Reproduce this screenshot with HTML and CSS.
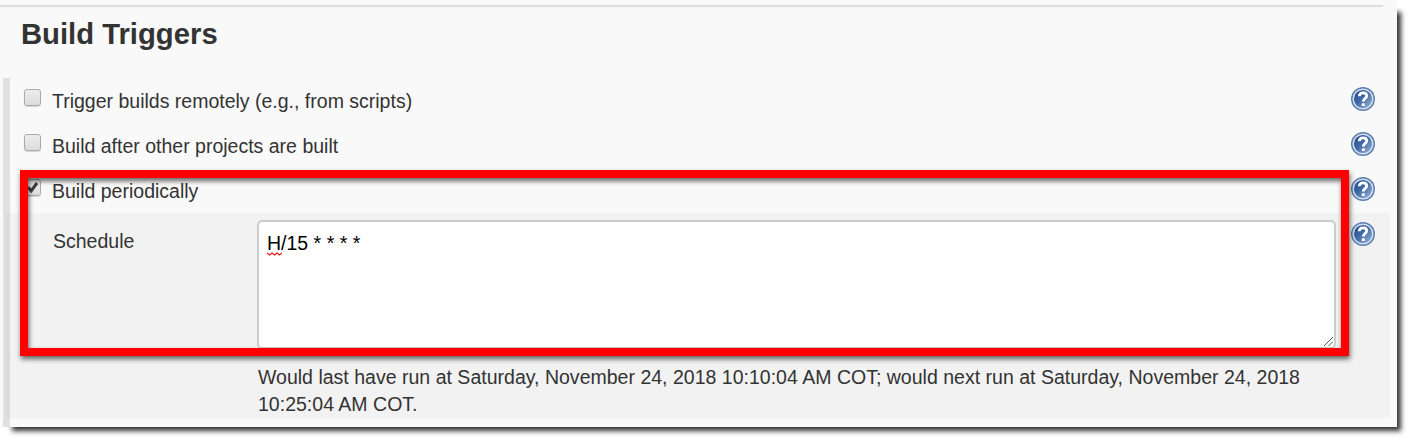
FILE: index.html
```html
<!DOCTYPE html>
<html lang="en">
<head>
<meta charset="utf-8">
<title>Build Triggers</title>
<link rel="stylesheet" href="styles.css">
</head>
<body>
<svg class="defs" width="0" height="0" aria-hidden="true">
  <defs>
    <linearGradient id="disc" x1="0" y1="0" x2="1" y2="1">
      <stop offset="0" stop-color="#1f4788"/>
      <stop offset=".45" stop-color="#4068a6"/>
      <stop offset="1" stop-color="#a3bddd"/>
    </linearGradient>
    <symbol id="help" viewBox="0 0 24 24">
      <circle cx="12" cy="12" r="12" fill="#5b7fae"/>
      <circle cx="12" cy="12" r="9.8" fill="url(#disc)" stroke="#d3dfee" stroke-width="1.5"/>
      <path d="M8.3 9.2C8.4 6.9 10 5.9 12.1 5.9c2.2 0 3.6 1.1 3.6 2.9 0 2.6-3.4 2.9-3.4 5.8" fill="none" stroke="#fff" stroke-width="2.8"/>
      <rect x="10.8" y="16.2" width="3" height="2.8" rx=".6" fill="#fff"/>
    </symbol>
  </defs>
</svg>
<main class="panel">
  <h1 class="title">Build Triggers</h1>
  <section class="triggers">
    <div class="row">
      <span class="check"></span>
      <span class="label">Trigger builds remotely (e.g., from scripts)</span>
      <svg class="help"><use href="#help"/></svg>
    </div>
    <div class="row">
      <span class="check"></span>
      <span class="label">Build after other projects are built</span>
      <svg class="help"><use href="#help"/></svg>
    </div>
    <div class="row">
      <span class="check"><svg class="tick" viewBox="0 0 17 17"><path d="M4 8.3l3.2 3.5L13 4" fill="none" stroke="#3c3c3c" stroke-width="3"/></svg></span>
      <span class="label">Build periodically</span>
      <svg class="help"><use href="#help"/></svg>
    </div>
    <div class="schedule">
      <div class="name">Schedule</div>
      <div class="field">
        <div class="textarea"><span class="typed"><span class="misspelled">H<svg class="squiggle" viewBox="0 0 15 4"><path d="M0 1l2.5 2L5 1l2.5 2L10 1l2.5 2L15 1" fill="none" stroke="#f01c1c" stroke-width="1.3"/></svg></span>/15 * * * *</span>
          <svg class="grip" viewBox="0 0 9 9"><path d="M0 9L9 0M4.5 9L9 4.5" fill="none" stroke="#555" stroke-width="1"/></svg>
        </div>
        <div class="hint">Would last have run at Saturday, November 24, 2018 10:10:04 AM COT; would next run at Saturday, November 24, 2018<br>10:25:04 AM COT.</div>
      </div>
      <svg class="help"><use href="#help"/></svg>
    </div>
  </section>
  <div class="highlight"></div>
</main>
</body>
</html>
```

FILE: styles.css
```css
* { box-sizing: border-box; }
body {
  margin: 0;
  height: 441px;
  background: #fff;
  font: 19.5px/27px "Liberation Sans", Arial, sans-serif;
  color: #333;
}
.defs { position: absolute; }
.panel {
  position: relative;
  width: 1397px;
  height: 427px;
  padding-top: 5px;
  background: #f9f9f9;
}
.panel::before {
  content: "";
  position: absolute;
  z-index: -1;
  left: 10px;
  top: 10px;
  right: 0;
  bottom: 0;
  box-shadow: 3px 3px 5px 1px rgba(0, 0, 0, .8);
}
.title {
  width: 1383px;
  height: 73px;
  margin: 0;
  padding: 9px 0 0 21px;
  border-top: 2px solid #ddd;
  font-size: 29.25px;
  line-height: 36px;
}
.triggers {
  height: 349px;
  margin-left: 3px;
  border-left: 7px solid #e0e0e0;
}
.row {
  display: flex;
  height: 45px;
  padding-left: 14px;
}
.check {
  width: 17px;
  height: 17px;
  margin: 11px 11px 0 0;
  border: 1.5px solid #aaa;
  border-radius: 3px;
  background: linear-gradient(#ececec, #dcdcdc);
  box-shadow: 0 1px 1px rgba(0, 0, 0, .15);
}
.tick { display: block; width: 17px; height: 17px; margin: -1px; }
.label { flex: 1; padding-top: 10px; }
.help {
  flex: none;
  width: 24px;
  height: 24px;
  margin: 9px 12px 0 0;
}
.row .help { margin-right: 22px; }
.schedule {
  display: flex;
  width: 1384px;
  height: 205px;
  margin-left: -4px;
  border-left: 4px solid #dadada;
  background: #f2f2f2;
}
.name { width: 247px; padding: 15px 0 0 43px; }
.field { width: 1079px; margin-right: 15px; padding-top: 7px; }
.textarea {
  display: flex;
  justify-content: space-between;
  align-items: flex-end;
  height: 129px;
  padding: 0 1px 1px 8px;
  border: 2px solid #ccc;
  border-radius: 5px;
  background: #fff;
  color: #000;
}
.typed { align-self: flex-start; padding-top: 8px; }
.misspelled { position: relative; }
.squiggle { position: absolute; left: 0; top: 20px; width: 15px; height: 4px; }
.grip { width: 9px; height: 9px; }
.hint { padding: 15px 0 0 1px; white-space: nowrap; letter-spacing: .012px; }
.schedule .help { margin-right: 0; }
.highlight {
  position: absolute;
  left: 20px;
  top: 170px;
  width: 1329px;
  height: 186px;
  border: 8px solid #f00;
  box-shadow: 1px 3px 5px rgba(0, 0, 0, .6), inset 1px 3px 5px rgba(0, 0, 0, .6);
}
```
